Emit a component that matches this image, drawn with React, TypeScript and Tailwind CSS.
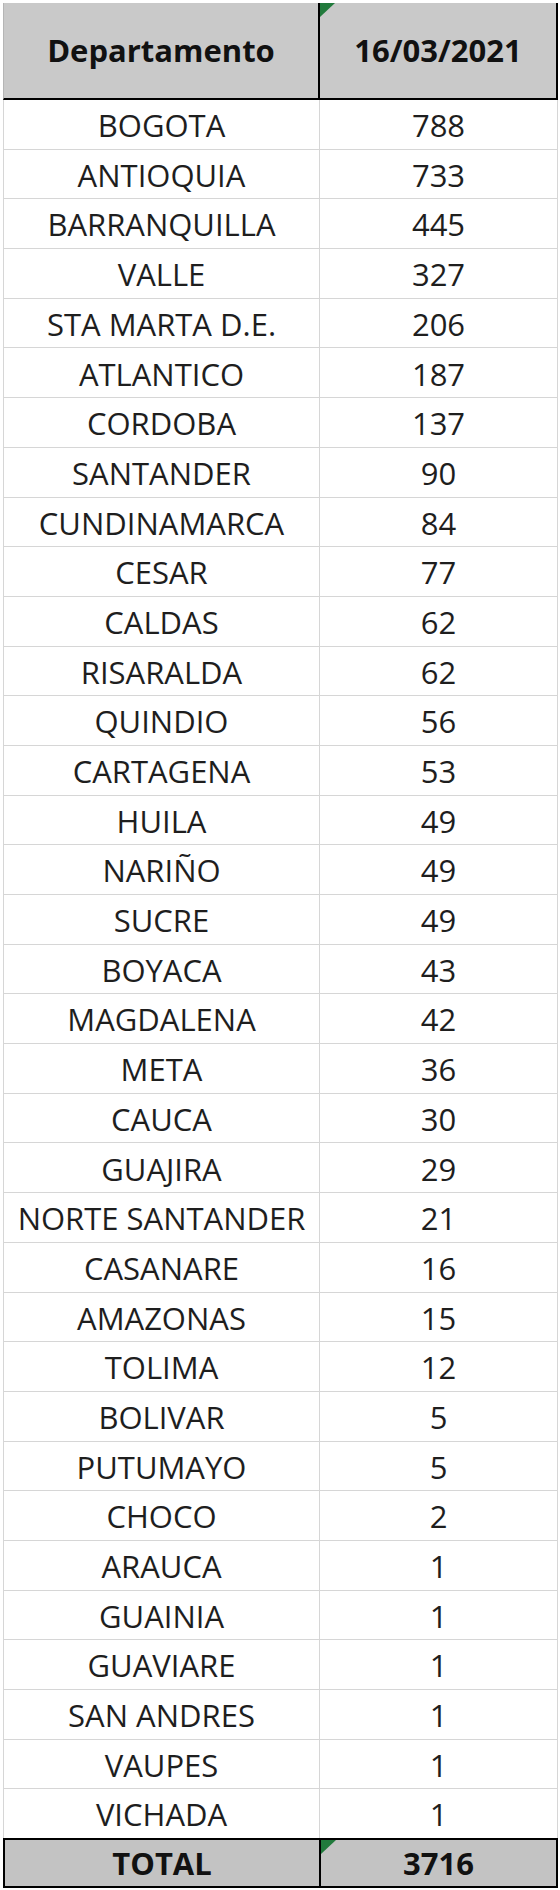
const rows: [string, number][] = [
  ["BOGOTA", 788],
  ["ANTIOQUIA", 733],
  ["BARRANQUILLA", 445],
  ["VALLE", 327],
  ["STA MARTA D.E.", 206],
  ["ATLANTICO", 187],
  ["CORDOBA", 137],
  ["SANTANDER", 90],
  ["CUNDINAMARCA", 84],
  ["CESAR", 77],
  ["CALDAS", 62],
  ["RISARALDA", 62],
  ["QUINDIO", 56],
  ["CARTAGENA", 53],
  ["HUILA", 49],
  ["NARIÑO", 49],
  ["SUCRE", 49],
  ["BOYACA", 43],
  ["MAGDALENA", 42],
  ["META", 36],
  ["CAUCA", 30],
  ["GUAJIRA", 29],
  ["NORTE SANTANDER", 21],
  ["CASANARE", 16],
  ["AMAZONAS", 15],
  ["TOLIMA", 12],
  ["BOLIVAR", 5],
  ["PUTUMAYO", 5],
  ["CHOCO", 2],
  ["ARAUCA", 1],
  ["GUAINIA", 1],
  ["GUAVIARE", 1],
  ["SAN ANDRES", 1],
  ["VAUPES", 1],
  ["VICHADA", 1],
];

function Flag() {
  return (
    <svg className="absolute left-0 top-0 w-[15px] h-[14px]" viewBox="0 0 15 14">
      <polygon points="0,0 15,0 0,14" fill="#217a3c" />
    </svg>
  );
}

export default function App() {
  const font = { fontFamily: '"Open Sans", "Liberation Sans", sans-serif' };
  return (
    <div className="w-[560px] h-[1890px] bg-white pt-[3px] pl-[3px]" style={font}>
      <div className="w-[555px]">
        {/* header */}
        <div className="grid grid-cols-[316px_1fr] h-[97px] bg-[#c9c9c9] border-b-2 border-r-2 border-black border-l border-l-[#b5b5b5] text-[31px] font-bold text-[#111]">
          <div className="flex items-center justify-center border-r-2 border-black">
            Departamento
          </div>
          <div className="relative flex items-center justify-center">
            <Flag />
            16/03/2021
          </div>
        </div>
        {/* data rows */}
        {rows.map(([name, n]) => (
          <div
            key={name}
            className="grid grid-cols-[316px_1fr] h-[49.7px] border-b border-[#d6d6d6] border-l border-r text-[31px] text-[#1e1e1e]"
          >
            <div className="flex items-center justify-center border-r border-[#d6d6d6] pt-[2px]">
              {name}
            </div>
            <div className="flex items-center justify-center pt-[2px]">{n}</div>
          </div>
        ))}
        {/* total */}
        <div className="grid grid-cols-[316px_1fr] h-[50px] -mt-px bg-[#c3c3c3] border-2 border-black text-[31px] font-bold text-[#111]">
          <div className="flex items-center justify-center border-r-2 border-black">
            TOTAL
          </div>
          <div className="relative flex items-center justify-center">
            <Flag />
            3716
          </div>
        </div>
      </div>
    </div>
  );
}
